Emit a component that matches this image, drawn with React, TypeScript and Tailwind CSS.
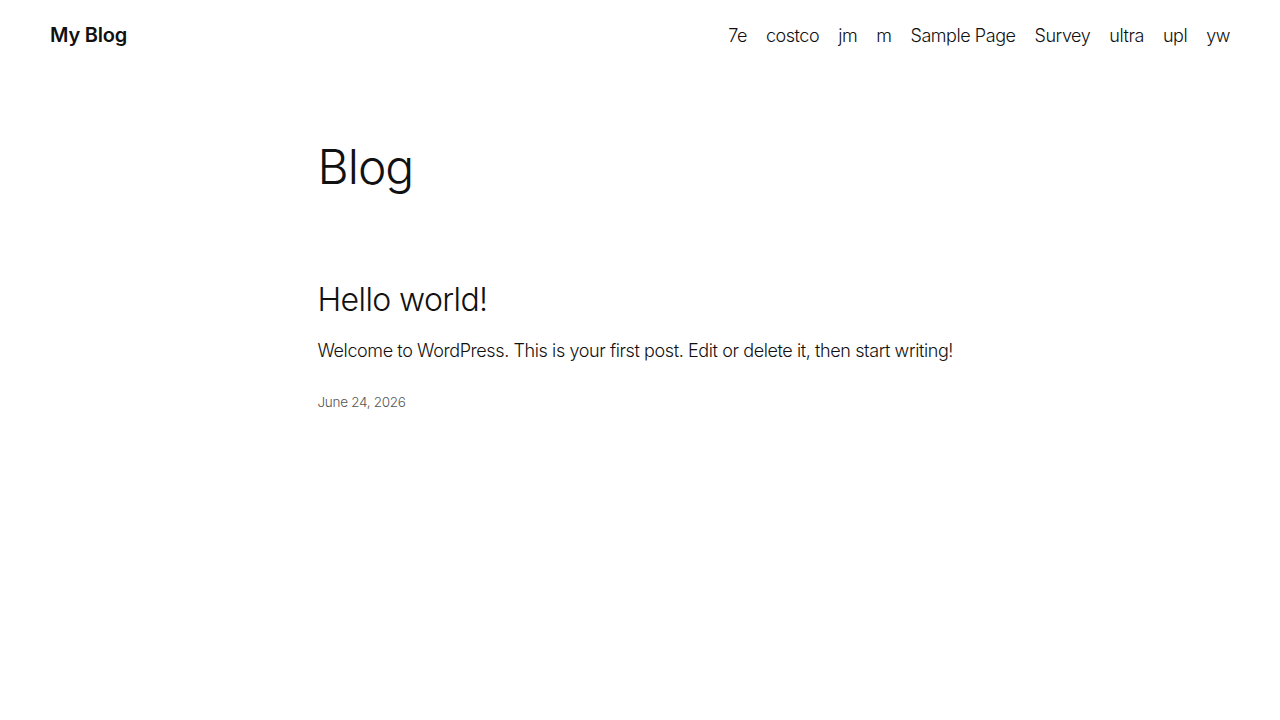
const navItems = ["7e", "costco", "jm", "m", "Sample Page", "Survey", "ultra", "upl", "yw"];

export default function App() {
  return (
    <div className="min-h-screen bg-white text-[#111111]" style={{ fontFamily: "Inter, 'Noto Sans', sans-serif" }}>
      <header className="flex h-[70px] items-center justify-between px-[50px]">
        <a className="text-[20px] font-semibold tracking-[-0.2px]">My Blog</a>
        <nav className="flex items-center gap-[19px] text-[18px] font-light tracking-[-0.45px]">
          {navItems.map((item) => (
            <a key={item}>{item}</a>
          ))}
        </nav>
      </header>
      <main className="mx-auto w-[645px] pt-[68px]">
        <h1 className="text-[48px] font-light leading-[1.2] tracking-[-1px]">Blog</h1>
        <article className="mt-[85px]">
          <h2 className="text-[32px] font-light leading-[1.2] tracking-[-0.6px]">Hello world!</h2>
          <p className="mt-[18px] text-[18px] font-light tracking-[-0.4px]">Welcome to WordPress. This is your first post. Edit or delete it, then start writing!</p>
          <p className="mt-[28px] text-[13.5px] font-light text-[#555555] tracking-[-0.3px]">June 24, 2026</p>
        </article>
      </main>
    </div>
  );
}
